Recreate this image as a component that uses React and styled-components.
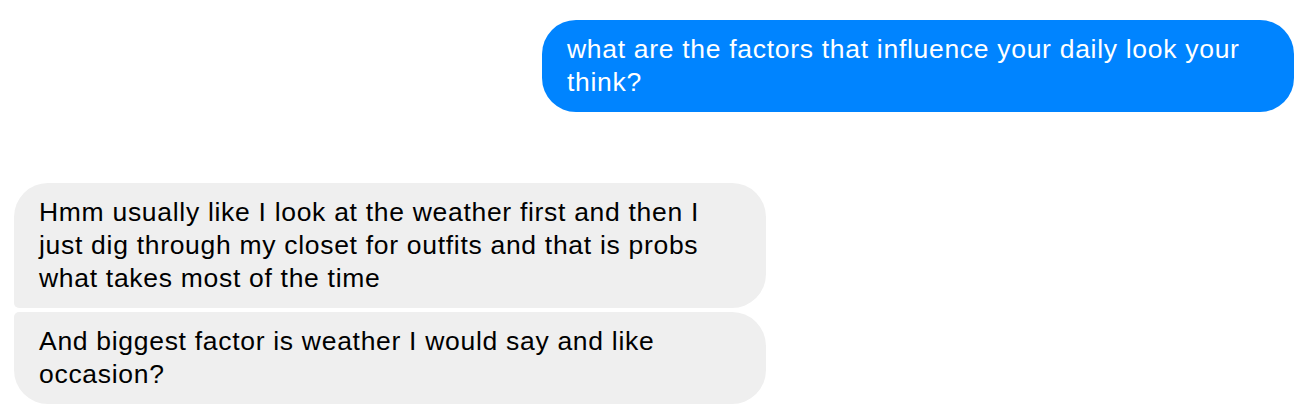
import styled, { createGlobalStyle } from 'styled-components';

const GlobalStyle = createGlobalStyle`
	body {
		margin: 0;
		background: #ffffff;
		font-family: "Liberation Sans", Arial, sans-serif;
	}
`;

const Thread = styled.div`
	display: flex;
	flex-direction: column;
	gap: 71px;
	padding: 20px 6px 0 14px;
`;

const Group = styled.div`
	display: flex;
	flex-direction: column;
	align-items: ${props => (props.$mine ? 'flex-end' : 'flex-start')};
	gap: 4px;
`;

const Bubble = styled.div`
	box-sizing: border-box;
	width: 752px;
	padding: 13px 26px 13px 25px;
	font-size: 26.5px;
	line-height: 33px;
	letter-spacing: 0.7px;
	border-radius: ${props => props.$radius || '34px'};
	background: ${props => (props.$mine ? '#0084ff' : '#efefef')};
	color: ${props => (props.$mine ? '#ffffff' : '#000000')};
`;

const App = () => {
	return (
		<>
			<GlobalStyle />
			<Thread>
				<Group $mine>
					<Bubble $mine>
						what are the factors that influence your daily look your think?
					</Bubble>
				</Group>
				<Group>
					<Bubble $radius="34px 34px 34px 5px">
						Hmm usually like I look at the weather first and then I just dig through my closet for outfits and that is probs what takes most of the time
					</Bubble>
					<Bubble $radius="5px 34px 34px 34px">
						And biggest factor is weather I would say and like occasion?
					</Bubble>
				</Group>
			</Thread>
		</>
	);
};

export default App;
